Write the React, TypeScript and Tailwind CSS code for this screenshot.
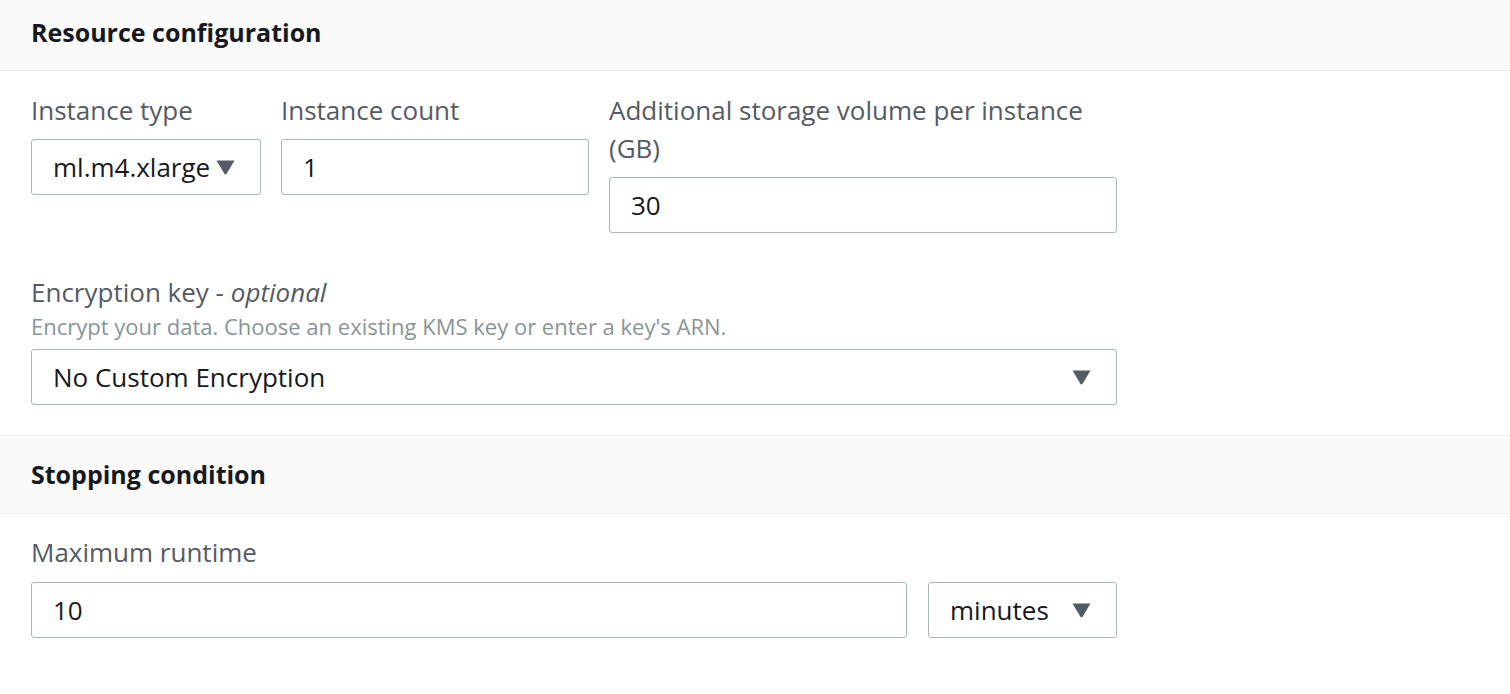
import React from "react";

function Caret() {
  return (
    <svg width="19" height="15" viewBox="0 0 19 15" className="shrink-0">
      <path d="M0.5 0.5 H18.5 L10.6 13.8 Q9.5 15.2 8.4 13.8 Z" fill="#545b64" />
    </svg>
  );
}

function SectionHeader({ title, first }: { title: string; first?: boolean }) {
  return (
    <div
      className={
        first
          ? "h-[71px] pb-[6px] flex items-center px-[31px] bg-[#fafafa] border-b border-[#eaeded]"
          : "h-[79px] flex items-center px-[31px] bg-[#fafafa] border-y border-[#eaeded]"
      }
    >
      <h2 className="text-[25px] font-bold text-[#16191f] leading-none">{title}</h2>
    </div>
  );
}

function Label({ children }: { children: React.ReactNode }) {
  return <div className="text-[26px] leading-[38px] text-[#545b64]">{children}</div>;
}

function TextBox({ value, className = "" }: { value: string; className?: string }) {
  return (
    <div
      className={`h-[56px] flex items-center pl-[21px] border border-[#aab7b8] rounded-[3px] bg-white text-[26px] text-[#16191f] ${className}`}
    >
      {value}
    </div>
  );
}

function Select({ value, className = "" }: { value: string; className?: string }) {
  return (
    <div
      className={`h-[56px] flex items-center justify-between pl-[21px] pr-[25px] border border-[#aab7b8] rounded-[3px] bg-white text-[26px] text-[#16191f] whitespace-nowrap ${className}`}
    >
      <span>{value}</span>
      <Caret />
    </div>
  );
}

export default function App() {
  return (
    <div
      className="w-[1510px] h-[694px] bg-white overflow-hidden"
      style={{ fontFamily: '"Open Sans", "Liberation Sans", sans-serif' }}
    >
      {/* Resource configuration */}
      <SectionHeader title="Resource configuration" first />
      <div className="px-[31px] pt-[20px] pb-[30px]">
        <div className="flex gap-[20px] items-start">
          <div className="w-[230px]">
            <Label>Instance type</Label>
            <Select value="ml.m4.xlarge" className="mt-[10px]" />
          </div>
          <div className="w-[308px]">
            <Label>Instance count</Label>
            <TextBox value="1" className="mt-[10px]" />
          </div>
          <div className="w-[508px]">
            <Label>
              Additional storage volume per instance
              <br />
              (GB)
            </Label>
            <TextBox value="30" className="mt-[10px]" />
          </div>
        </div>

        <div className="mt-[40px] w-[1086px]">
          <Label>
            Encryption key - <i>optional</i>
          </Label>
          <div className="text-[22px] leading-[30px] text-[#879596]">
            Encrypt your data. Choose an existing KMS key or enter a key's ARN.
          </div>
          <Select value="No Custom Encryption" className="mt-[8px]" />
        </div>
      </div>

      {/* Stopping condition */}
      <SectionHeader title="Stopping condition" />
      <div className="px-[31px] pt-[19px]">
        <Label>Maximum runtime</Label>
        <div className="mt-[11px] flex gap-[21px] w-[1086px]">
          <TextBox value="10" className="flex-1" />
          <Select value="minutes" className="w-[189px]" />
        </div>
      </div>
    </div>
  );
}
